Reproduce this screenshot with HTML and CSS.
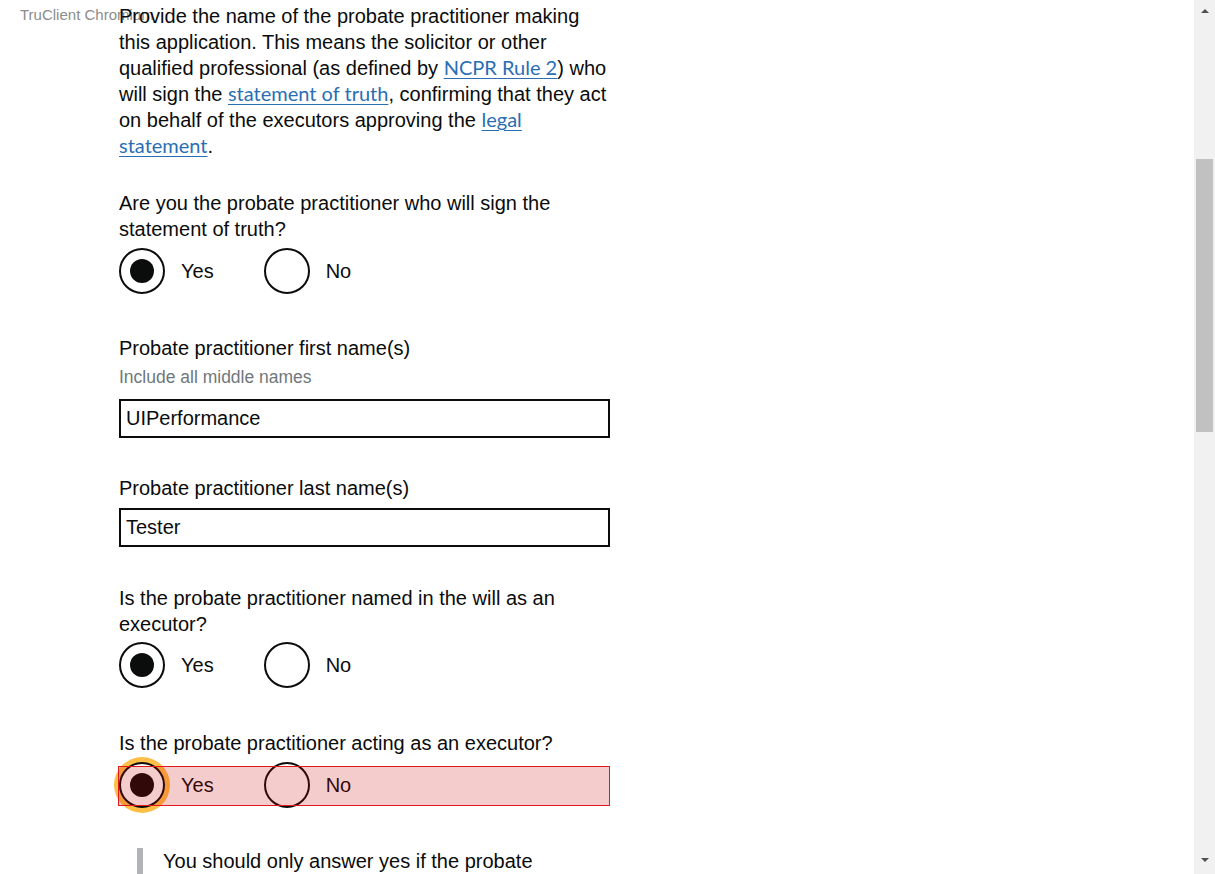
FILE: index.html
```html
<!DOCTYPE html>
<html lang="en">
<head>
<meta charset="utf-8">
<title>Probate practitioner</title>
<link rel="stylesheet" href="styles.css">
</head>
<body>
<div class="viewport">
  <div class="tool-label">TruClient Chromium</div>
  <main class="content">
    <p class="intro">Provide the name of the probate practitioner making this application. This means the solicitor or other qualified professional (as defined by <a href="#" class="link">NCPR Rule 2</a>) who will sign the <a href="#" class="link">statement of truth</a>, confirming that they act on behalf of the executors approving the <a href="#" class="link">legal statement</a>.</p>

    <div class="question q-first">Are you the probate practitioner who will sign the statement of truth?</div>
    <div class="radios r-first">
      <label class="radio-item"><span class="radio checked"></span><span class="radio-label">Yes</span></label>
      <label class="radio-item"><span class="radio"></span><span class="radio-label">No</span></label>
    </div>

    <div class="question q-firstname">Probate practitioner first name(s)</div>
    <div class="hint">Include all middle names</div>
    <div class="input i-first">UIPerformance</div>

    <div class="question q-lastname">Probate practitioner last name(s)</div>
    <div class="input i-last">Tester</div>

    <div class="question q-named">Is the probate practitioner named in the will as an executor?</div>
    <div class="radios r-named">
      <label class="radio-item"><span class="radio checked"></span><span class="radio-label">Yes</span></label>
      <label class="radio-item"><span class="radio"></span><span class="radio-label">No</span></label>
    </div>

    <div class="question q-acting">Is the probate practitioner acting as an executor?</div>
    <div class="radios r-acting">
      <label class="radio-item"><span class="radio checked focused"></span><span class="radio-label">Yes</span></label>
      <label class="radio-item"><span class="radio"></span><span class="radio-label">No</span></label>
      <div class="highlight"></div>
    </div>

    <div class="inset">You should only answer yes if the probate</div>
  </main>
  <aside class="scrollbar">
    <div class="sb-btn"><span class="arrow-up"></span></div>
    <div class="sb-track"><div class="sb-thumb"></div></div>
    <div class="sb-btn sb-btn-down"><span class="arrow-down"></span></div>
  </aside>
</div>
</body>
</html>
```
FILE: styles.css
```css
html, body {
  margin: 0;
  padding: 0;
  background: #ffffff;
}

body {
  font-family: "Liberation Sans", Arial, sans-serif;
  color: #0b0c0c;
  overflow: hidden;
}

.viewport {
  position: relative;
  display: flex;
  width: 1215px;
  height: 874px;
  overflow: hidden;
}

.tool-label {
  position: absolute;
  left: 20px;
  top: 6px;
  font-size: 15px;
  line-height: 17px;
  color: #8c8c8c;
  z-index: 0;
}

.content {
  position: relative;
  z-index: 1;
  flex: 1;
  padding: 3px 0 0 119px;
  box-sizing: border-box;
}

.content > * {
  width: 491px;
}

.intro {
  margin: 0;
  font-size: 20px;
  line-height: 26px;
}

.link {
  font-family: Lato, "Liberation Sans", sans-serif;
  font-size: 20px;
  line-height: 20px;
  color: #2a6eb4;
  text-decoration: underline;
  text-decoration-thickness: 1px;
  text-underline-offset: 3px;
}

.question {
  font-size: 20px;
  line-height: 26px;
}

.q-first { margin-top: 31px; }
.q-firstname { margin-top: 41px; }
.q-lastname { margin-top: 37px; }
.q-named { margin-top: 38px; }
.q-acting { margin-top: 42px; }

.hint {
  margin-top: 6px;
  font-size: 17.5px;
  line-height: 20px;
  color: #6f777b;
}

.input {
  box-sizing: border-box;
  height: 39px;
  border: 2px solid #0b0c0c;
  padding: 0 5px;
  font-size: 20px;
  line-height: 35px;
}

.i-first { margin-top: 12px; }
.i-last { margin-top: 7px; }

.radios {
  position: relative;
  display: flex;
  align-items: center;
  height: 46px;
}

.r-first { margin-top: 6px; }
.r-named { margin-top: 5px; }
.r-acting { margin-top: 6px; }

.radio-item {
  display: flex;
  align-items: center;
  gap: 16px;
  margin-right: 50px;
  font-size: 20px;
}

.radio {
  box-sizing: border-box;
  width: 46px;
  height: 46px;
  border: 2.5px solid #0b0c0c;
  border-radius: 50%;
  background: #ffffff;
  display: flex;
  align-items: center;
  justify-content: center;
}

.radio.checked::after {
  content: "";
  width: 24px;
  height: 24px;
  border-radius: 50%;
  background: #0b0c0c;
}

.radio.focused {
  box-shadow: 0 0 0 5px #ffbf47;
}

.highlight {
  position: absolute;
  left: -1px;
  top: 4px;
  width: 492px;
  height: 40px;
  box-sizing: border-box;
  border: 1px solid #e0191b;
  background: rgba(200, 0, 0, 0.2);
  pointer-events: none;
}

.inset {
  box-sizing: border-box;
  margin-top: 40px;
  margin-left: 18px;
  width: 473px;
  border-left: 6px solid #b1b4b6;
  padding-left: 20px;
  font-size: 20px;
  line-height: 26px;
}

.scrollbar {
  flex: 0 0 21px;
  display: flex;
  flex-direction: column;
  background: #f1f1f1;
}

.sb-btn {
  height: 17px;
  display: flex;
  justify-content: center;
  align-items: flex-end;
}

.sb-btn-down {
  align-items: flex-start;
  height: 16px;
}

.arrow-up {
  width: 0;
  height: 0;
  border-left: 4px solid transparent;
  border-right: 4px solid transparent;
  border-bottom: 4px solid #505050;
  margin-bottom: 4px;
}

.arrow-down {
  width: 0;
  height: 0;
  border-left: 4px solid transparent;
  border-right: 4px solid transparent;
  border-top: 4px solid #505050;
  margin-top: 0px;
}

.sb-track {
  flex: 1;
  padding: 142px 2px 0 2px;
}

.sb-thumb {
  height: 273px;
  background: #c1c1c1;
}
```
